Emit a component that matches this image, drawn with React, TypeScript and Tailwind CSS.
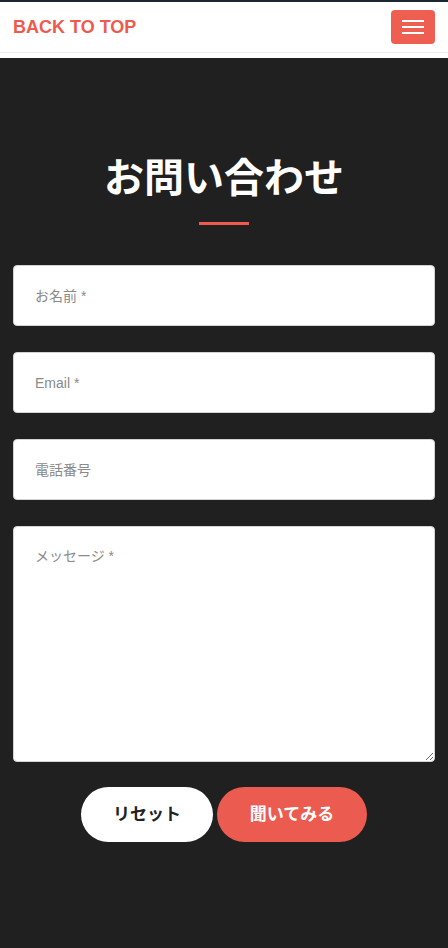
import { useState } from 'react'

const jp = '"Liberation Sans", "Noto Sans CJK JP", "Noto Sans", sans-serif'

export default function App() {
  const [name, setName] = useState('')
  const [email, setEmail] = useState('')
  const [tel, setTel] = useState('')
  const [message, setMessage] = useState('')

  const reset = () => {
    setName('')
    setEmail('')
    setTel('')
    setMessage('')
  }

  const field =
    'w-full h-[61px] rounded-[4px] border border-[#d4d4d4] bg-white px-[21px] text-[14px] text-[#333] placeholder:text-[#8a8a8a] outline-none'

  return (
    <div className="min-h-[948px] flex flex-col bg-[#202020]" style={{ fontFamily: jp }}>
      {/* header */}
      <div className="h-[2px] bg-[#1c2733]" />
      <header className="bg-white">
        <div className="h-[50px] flex items-center justify-between px-[13px]">
          <a href="#" className="text-[18px] font-bold text-[#ee5b4e]">
            BACK TO TOP
          </a>
          <button className="w-[44px] h-[34px] rounded-[4px] bg-[#ee5f51] flex flex-col items-center justify-center gap-[4px]">
            <span className="block w-[22px] h-[2px] bg-white" />
            <span className="block w-[22px] h-[2px] bg-white" />
            <span className="block w-[22px] h-[2px] bg-white" />
          </button>
        </div>
        <div className="h-px bg-[#ececec]" />
        <div className="h-[5px]" />
      </header>

      {/* contact */}
      <section className="flex-1 px-[13px] pt-[92px] pb-[106px]">
        <h1 className="text-center text-[40px] leading-[56px] font-bold text-white">お問い合わせ</h1>
        <div className="mx-auto mt-[16px] w-[50px] h-[3px] bg-[#ee5b4e]" />

        <form className="mt-[40px] flex flex-col gap-[26px]" onSubmit={(e) => e.preventDefault()}>
          <input className={field} placeholder="お名前 *" value={name} onChange={(e) => setName(e.target.value)} />
          <input className={field} placeholder="Email *" value={email} onChange={(e) => setEmail(e.target.value)} />
          <input className={field} placeholder="電話番号" value={tel} onChange={(e) => setTel(e.target.value)} />
          <textarea
            className="w-full h-[236px] rounded-[4px] border border-[#d4d4d4] bg-white px-[21px] pt-[19px] text-[14px] leading-[20px] text-[#333] placeholder:text-[#8a8a8a] outline-none"
            placeholder="メッセージ *"
            value={message}
            onChange={(e) => setMessage(e.target.value)}
          />
          <div className="-mt-[1px] flex justify-center gap-[4px]">
            <button
              type="button"
              onClick={reset}
              className="w-[132px] h-[55px] rounded-full bg-white text-[17px] font-bold text-[#222]"
            >
              リセット
            </button>
            <button type="submit" className="w-[150px] h-[55px] rounded-full bg-[#ec5b4f] text-[17px] font-bold text-white">
              聞いてみる
            </button>
          </div>
        </form>
      </section>
      <div className="h-px bg-[#3a3a3a]" />
    </div>
  )
}
